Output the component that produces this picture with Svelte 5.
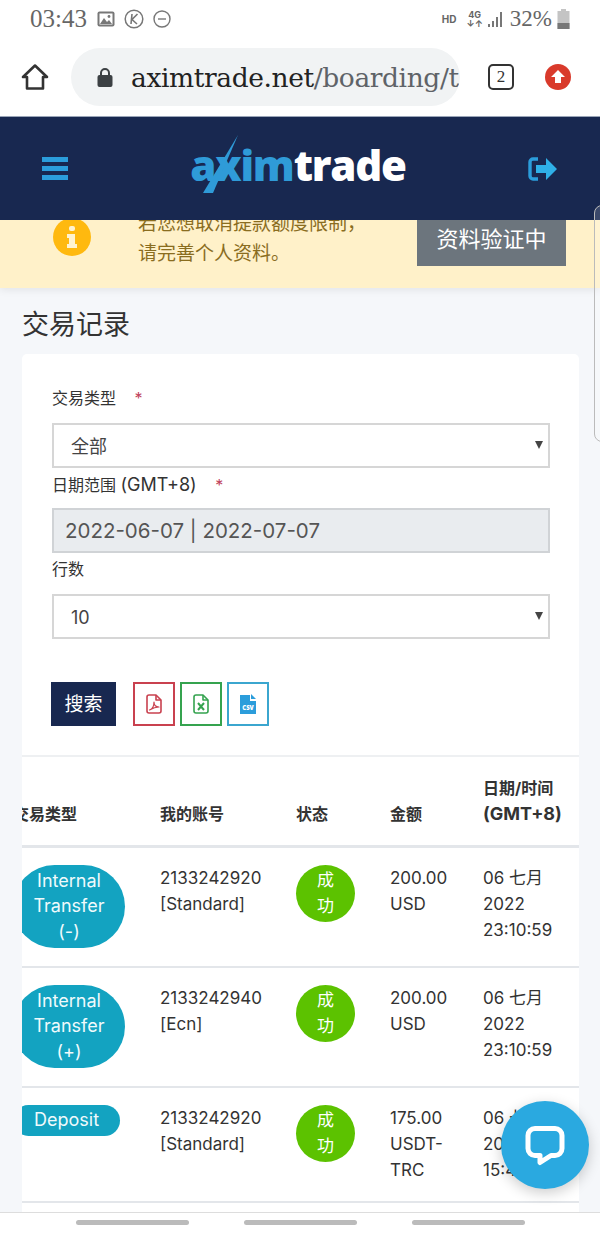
<script lang="ts">
  const rows = [
    { type: "Internal Transfer (-)", account: "2133242920", plan: "[Standard]", amount: "200.00 USD", date: "06 七月", year: "2022", time: "23:10:59" },
    { type: "Internal Transfer (+)", account: "2133242940", plan: "[Ecn]", amount: "200.00 USD", date: "06 七月", year: "2022", time: "23:10:59" },
    { type: "Deposit", account: "2133242920", plan: "[Standard]", amount: "175.00 USDT-TRC", date: "06 七月", year: "2022", time: "15:42:18" },
    { type: "Deposit", account: "2133242920", plan: "[Standard]", amount: "175.00 USDT-TRC", date: "06 七月", year: "2022", time: "15:40:02" }
  ];
</script>

<div class="phone">
  <!-- Android status bar -->
  <div class="status">
    <span class="clock">03:43</span>
    <svg class="st-icon" width="18" height="16" viewBox="0 0 18 16">
      <rect x="0.5" y="0.5" width="17" height="15" rx="2" fill="#777" />
      <rect x="2.5" y="2.5" width="13" height="11" fill="#fff" />
      <path d="M3 13l4-6 3 4 2-2 3 4z" fill="#777" />
      <circle cx="12" cy="5.5" r="1.4" fill="#777" />
    </svg>
    <svg class="st-icon" width="20" height="20" viewBox="0 0 20 20" fill="none" stroke="#777">
      <circle cx="10" cy="10" r="8.8" stroke-width="1.5" />
      <path d="M8 5l-1 10M13.5 5L8 10.5 13 15" stroke-width="1.6" />
    </svg>
    <svg class="st-icon" width="18" height="18" viewBox="0 0 18 18" fill="none" stroke="#777" stroke-width="1.4">
      <circle cx="9" cy="9" r="8" />
      <path d="M5 9h8" />
    </svg>
    <span class="st-right">
      <span class="hd">HD</span>
      <span class="net">4G<br />↓↑</span>
      <svg width="15" height="15" viewBox="0 0 15 15" fill="#777">
        <rect x="0" y="12" width="2" height="3" />
        <rect x="4" y="9" width="2" height="6" />
        <rect x="8" y="5" width="2" height="10" />
        <rect x="12" y="0" width="2" height="15" />
      </svg>
      <span class="pct">32%</span>
      <svg width="13" height="20" viewBox="0 0 13 20">
        <rect x="4" y="0" width="5" height="3" fill="#c4c4c4" />
        <rect x="0.5" y="2" width="12" height="18" fill="#c4c4c4" />
        <rect x="0.5" y="14" width="12" height="6" fill="#777" />
      </svg>
    </span>
  </div>

  <!-- Browser toolbar -->
  <div class="toolbar">
    <svg width="28" height="28" viewBox="0 0 28 28" fill="none" stroke="#333" stroke-width="2.6" stroke-linejoin="round">
      <path d="M14 2.5L2 14h4v11.5h16V14h4z" />
    </svg>
    <div class="url">
      <svg width="16" height="20" viewBox="0 0 16 20">
        <path d="M4 9V6a4 4 0 0 1 8 0v3" fill="none" stroke="#3c4043" stroke-width="2" />
        <rect x="0.5" y="8" width="15" height="12" rx="2" fill="#3c4043" />
      </svg>
      <span class="url-text"><b>aximtrade.net</b>/boarding/t</span>
    </div>
    <span class="tabs">2</span>
    <svg class="update" width="26" height="26" viewBox="0 0 26 26">
      <circle cx="13" cy="13" r="13" fill="#d93a2b" />
      <path d="M13 6l7 7h-4v6h-6v-6H6z" fill="#fff" />
    </svg>
  </div>

  <!-- Site header -->
  <header class="nav">
    <div class="burger"><i></i><i></i><i></i></div>
    <div class="logo">
      <svg class="slash" width="36" height="60" viewBox="0 0 36 60">
        <path d="M35 0L10 58H0z" fill="#2f9bd8" />
      </svg>
      <span class="blue">axim</span><span>trade</span>
    </div>
    <svg class="exit" width="30" height="24" viewBox="0 0 30 24">
      <path d="M10 2H5a3 3 0 0 0-3 3v14a3 3 0 0 0 3 3h5" fill="none" stroke="#2b9ddb" stroke-width="3.4" />
      <path d="M8 8h10V1l11 11-11 11v-7H8z" fill="#2fb0e8" />
    </svg>
  </header>

  <div class="page">
    <div class="notice">
      <svg class="info" width="38" height="38" viewBox="0 0 38 38">
        <circle cx="19" cy="19" r="19" fill="#ffb90f" />
        <rect x="16" y="8" width="6" height="5" rx="2" fill="#fff3d0" />
        <path d="M14 16h8v10h2v4H14v-4h2v-6h-2z" fill="#fff3d0" />
      </svg>
      <p>若您想取消提款额度限制，<br />请完善个人资料。</p>
      <button class="verify">资料验证中</button>
    </div>

    <h1>交易记录</h1>

    <section class="card">
      <form class="filters">
        <label for="type">交易类型 <em>*</em></label>
        <div class="select">
          <select id="type"><option>全部</option></select>
        </div>
        <label for="range">日期范围 <span class="gmt">(GMT+8)</span> <em>*</em></label>
        <input id="range" value="2022-06-07 | 2022-07-07" readonly />
        <label for="lines" class="plain">行数</label>
        <div class="select">
          <select id="lines"><option>10</option></select>
        </div>
        <div class="actions">
          <button type="button" class="search">搜索</button>
          <button type="button" class="file pdf" aria-label="PDF">
            <svg width="16" height="20" viewBox="0 0 16 20" fill="none" stroke="currentColor" stroke-width="1.6" stroke-linejoin="round">
              <path d="M1 3a2 2 0 0 1 2-2h7l5 5v11a2 2 0 0 1-2 2H3a2 2 0 0 1-2-2z" />
              <path d="M10 1v5h5" />
              <path d="M3.5 16c3-1 4.500-4.500 4.500-8 0 3 2 5 5 5-3 0-6 1-9.500 3z" stroke-width="1.200" />
            </svg>
          </button>
          <button type="button" class="file xls" aria-label="Excel">
            <svg width="16" height="20" viewBox="0 0 16 20" fill="none" stroke="currentColor" stroke-width="1.6" stroke-linejoin="round">
              <path d="M1 3a2 2 0 0 1 2-2h7l5 5v11a2 2 0 0 1-2 2H3a2 2 0 0 1-2-2z" />
              <path d="M10 1v5h5" />
              <path d="M5 9l6 7M11 9l-6 7" stroke-width="2" />
            </svg>
          </button>
          <button type="button" class="file csv" aria-label="CSV">
            <svg width="16" height="20" viewBox="0 0 16 20">
              <path d="M0 1h10v6h6v13H0z" fill="#2b9ddb" />
              <path d="M11 0l5 5h-5z" fill="#2b9ddb" />
              <text x="8" y="15.500" text-anchor="middle" class="csv-label">CSV</text>
            </svg>
          </button>
        </div>
      </form>

      <div class="table-wrap">
        <table>
          <thead>
            <tr>
              <th>交易类型</th>
              <th>我的账号</th>
              <th>状态</th>
              <th>金额</th>
              <th>日期/时间<br /><span class="gmt">(GMT+8)</span></th>
            </tr>
          </thead>
          <tbody>
            {#each rows as row}
              <tr>
                <td><span class="type" class:short={row.type === "Deposit"}>{row.type}</span></td>
                <td>{row.account}<br />{row.plan}</td>
                <td><span class="ok">成功</span></td>
                <td class="amount">{row.amount}</td>
                <td>{row.date}<br />{row.year}<br />{row.time}</td>
              </tr>
            {/each}
          </tbody>
        </table>
      </div>
    </section>
  </div>

  <div class="home-bar"><i></i><i></i><i></i></div>

  <!-- Overlays -->
  <div class="edge"></div>
  <button class="chat" aria-label="Chat">
    <svg width="44" height="44" viewBox="0 0 44 44">
      <path d="M12 5.500h20a7 7 0 0 1 7 7v13a7 7 0 0 1-7 7h-4l-11 7v-7h-5a7 7 0 0 1-7-7v-13a7 7 0 0 1 7-7z" fill="none" stroke="#fff" stroke-width="5" stroke-linejoin="round" />
    </svg>
  </button>
</div>

<style>
  :global(body) {
    margin: 0;
  }

  .phone {
    position: relative;
    display: flex;
    flex-direction: column;
    width: 600px;
    height: 1233px;
    overflow: hidden;
    background: #f5f7fa;
    font-family: Inter, "Noto Sans CJK SC", sans-serif;
    color: #333;
  }

  .status {
    display: flex;
    align-items: center;
    height: 38px;
    padding: 0 30px 0 30px;
    background: #fff;
    color: #666;
    box-sizing: border-box;
    flex: none;
  }
  .clock {
    font-family: "Liberation Serif", serif;
    font-size: 25px;
    margin-right: 10px;
  }
  .st-icon {
    margin-right: 9px;
  }
  .st-right {
    display: flex;
    align-items: center;
    gap: 5px;
    margin-left: auto;
  }
  .hd {
    font-size: 10px;
    font-weight: 700;
    margin-right: 5px;
  }
  .net {
    font-size: 9px;
    font-weight: 700;
    line-height: 9px;
    text-align: center;
  }
  .pct {
    font-family: "Liberation Serif", serif;
    font-size: 23px;
    margin-left: 2px;
  }

  .toolbar {
    display: flex;
    align-items: center;
    height: 78px;
    padding: 0 0 0 21px;
    background: #fff;
    border-bottom: 1px solid #9aa5b8;
    flex: none;
  }
  .url {
    display: flex;
    align-items: center;
    gap: 18px;
    width: 389px;
    height: 58px;
    margin-left: 22px;
    padding-left: 26px;
    box-sizing: border-box;
    border-radius: 29px;
    background: #f1f3f4;
    overflow: hidden;
  }
  .url-text {
    font-family: "DejaVu Serif", serif;
    font-size: 26.500px;
    letter-spacing: -0.4px;
    color: #5f6368;
    white-space: nowrap;
  }
  .url-text b {
    font-weight: 400;
    color: #222;
  }
  .tabs {
    display: flex;
    align-items: center;
    justify-content: center;
    width: 22px;
    height: 22px;
    margin-left: 28px;
    border: 2px solid #333;
    border-radius: 5px;
    font-family: "Liberation Serif", serif;
    font-size: 17px;
  }
  .update {
    margin-left: 31px;
  }

  .nav {
    position: relative;
    display: flex;
    align-items: center;
    justify-content: space-between;
    height: 103px;
    padding: 0 42px;
    background: #182850;
    flex: none;
  }
  .burger {
    display: flex;
    flex-direction: column;
    gap: 4px;
    width: 26px;
  }
  .burger i {
    height: 5px;
    background: #2b9ddb;
  }
  .logo {
    position: relative;
    margin: 0 0 8px 0;
    font-family: "Open Sans", sans-serif;
    font-weight: 800;
    font-size: 42px;
    letter-spacing: -1.2px;
    color: #fff;
    line-height: 1;
  }
  .logo .blue {
    color: #2f9bd8;
  }
  .slash {
    position: absolute;
    left: 13px;
    top: -9px;
  }

  .page {
    flex: 1;
    min-height: 0;
    overflow: hidden;
  }

  .notice {
    display: flex;
    align-items: flex-start;
    height: 90px;
    margin-top: -22px;
    padding: 11px 34px 0 53px;
    box-sizing: border-box;
    background: #fff1c9;
    box-shadow: 0 2px 8px rgba(0, 0, 0, 0.08);
    color: #8a6d1f;
  }
  .info {
    flex: none;
    margin-top: 9px;
  }
  .notice p {
    margin: 0 0 0 47px;
    font-size: 19px;
    line-height: 30px;
  }
  .verify {
    width: 149px;
    height: 57px;
    margin-left: auto;
    padding-bottom: 3px;
    border: none;
    background: #6c757d;
    color: #fff;
    font-family: inherit;
    font-size: 22px;
  }

  h1 {
    margin: 18px 0 10px 22px;
    font-size: 27px;
    font-weight: 400;
    line-height: 38px;
    color: #333;
  }

  .card {
    width: 557px;
    margin-left: 22px;
    background: #fff;
    border-radius: 5px 5px 0 0;
  }
  .filters {
    display: flex;
    flex-direction: column;
    padding: 31px 29px 29px 30px;
    border-bottom: 2px solid #eef0f2;
  }
  label {
    height: 27px;
    font-size: 16px;
    line-height: 27px;
    margin-bottom: 11px;
  }
  label[for="range"] {
    height: 32px;
    line-height: 33px;
    margin-bottom: 8px;
  }
  label.plain {
    margin-bottom: 13px;
    height: 28px;
    line-height: 32px;
  }
  .gmt {
    font-size: 18px;
  }
  em {
    margin-left: 14px;
    color: #c0415a;
    font-style: normal;
  }
  .select {
    position: relative;
  }
  .select::after {
    content: "";
    position: absolute;
    right: 7px;
    top: 18px;
    border-left: 4px solid transparent;
    border-right: 4px solid transparent;
    border-top: 8px solid #444;
  }
  select {
    display: block;
    width: 100%;
    height: 45px;
    padding: 2px 17px 0;
    box-sizing: border-box;
    border: 2px solid #d6d6d6;
    border-radius: 0;
    background: #fff;
    color: #444;
    font-family: inherit;
    font-size: 18px;
    appearance: none;
  }
  input {
    display: block;
    height: 45px;
    padding: 0 11px;
    box-sizing: border-box;
    border: 2px solid #d0d3d6;
    background: #e9ecef;
    color: #555;
    font-family: inherit;
    font-size: 20.500px;
  }
  .actions {
    display: flex;
    margin-top: 43px;
    margin-left: -1px;
    gap: 5px;
  }
  .actions button {
    height: 44px;
    padding: 0;
    cursor: pointer;
  }
  .actions .search {
    width: 65px;
    margin-right: 12px;
    padding-bottom: 4px;
    border: none;
    background: #182850;
    color: #fff;
    font-family: inherit;
    font-size: 19px;
  }
  .file {
    display: flex;
    align-items: center;
    justify-content: center;
    width: 42px;
    background: #fff;
    border: 2px solid currentColor;
  }
  .pdf {
    color: #c9414f;
  }
  .xls {
    color: #35a34f;
  }
  .csv {
    color: #3ba6cf;
  }
  .csv-label {
    font-family: "Open Sans", sans-serif;
    font-size: 6px;
    font-weight: 800;
    fill: #fff;
  }

  .table-wrap {
    overflow: hidden;
  }
  table {
    width: 570px;
    margin-left: -9px;
    border-collapse: collapse;
    table-layout: fixed;
    font-size: 17px;
  }
  th:nth-child(1) {
    width: 147px;
  }
  th:nth-child(2) {
    width: 136px;
  }
  th:nth-child(3) {
    width: 94px;
  }
  th:nth-child(4) {
    width: 93px;
  }
  th {
    height: 89px;
    padding: 0 0 18px;
    box-sizing: border-box;
    border-bottom: 3px solid #e3e6ea;
    vertical-align: bottom;
    text-align: left;
    font-size: 16px;
    font-weight: 700;
    line-height: 26px;
  }
  td {
    padding: 17px 0 18px;
    border-bottom: 2px solid #e3e6ea;
    vertical-align: top;
    line-height: 26px;
    color: #333;
  }
  .amount {
    padding-right: 16px;
  }
  .type {
    display: block;
    width: 112px;
    height: 83px;
    padding: 3px 14px;
    box-sizing: border-box;
    border-radius: 42px;
    background: #13a3c1;
    color: #f0fafc;
    font-size: 18px;
    text-align: center;
    line-height: 25.500px;
  }
  .type.short {
    width: 107px;
    height: 31px;
    padding: 2px 0;
    border-radius: 16px;
  }
  .ok {
    display: block;
    width: 59px;
    height: 57px;
    padding: 2px 21px 0;
    box-sizing: border-box;
    border-radius: 50%;
    background: #5cc200;
    color: #fff;
    font-size: 17px;
    text-align: center;
  }

  .home-bar {
    display: flex;
    justify-content: center;
    gap: 55px;
    height: 21px;
    padding-top: 7px;
    box-sizing: border-box;
    background: #fff;
    border-top: 1px solid #ddd;
    flex: none;
  }
  .home-bar i {
    width: 113px;
    height: 5px;
    border-radius: 3px;
    background: #bbb;
  }

  .edge {
    position: absolute;
    right: -4px;
    top: 205px;
    width: 8px;
    height: 235px;
    border: 1px solid #bbb;
    border-radius: 8px 0 0 8px;
    background: rgba(255, 255, 255, 0.15);
  }
  .chat {
    position: absolute;
    left: 501px;
    top: 1101px;
    display: flex;
    align-items: center;
    justify-content: center;
    width: 88px;
    height: 88px;
    padding: 0;
    border: none;
    border-radius: 50%;
    background: #2aa9e0;
    box-shadow: 0 4px 14px rgba(0, 0, 0, 0.2);
  }
</style>
